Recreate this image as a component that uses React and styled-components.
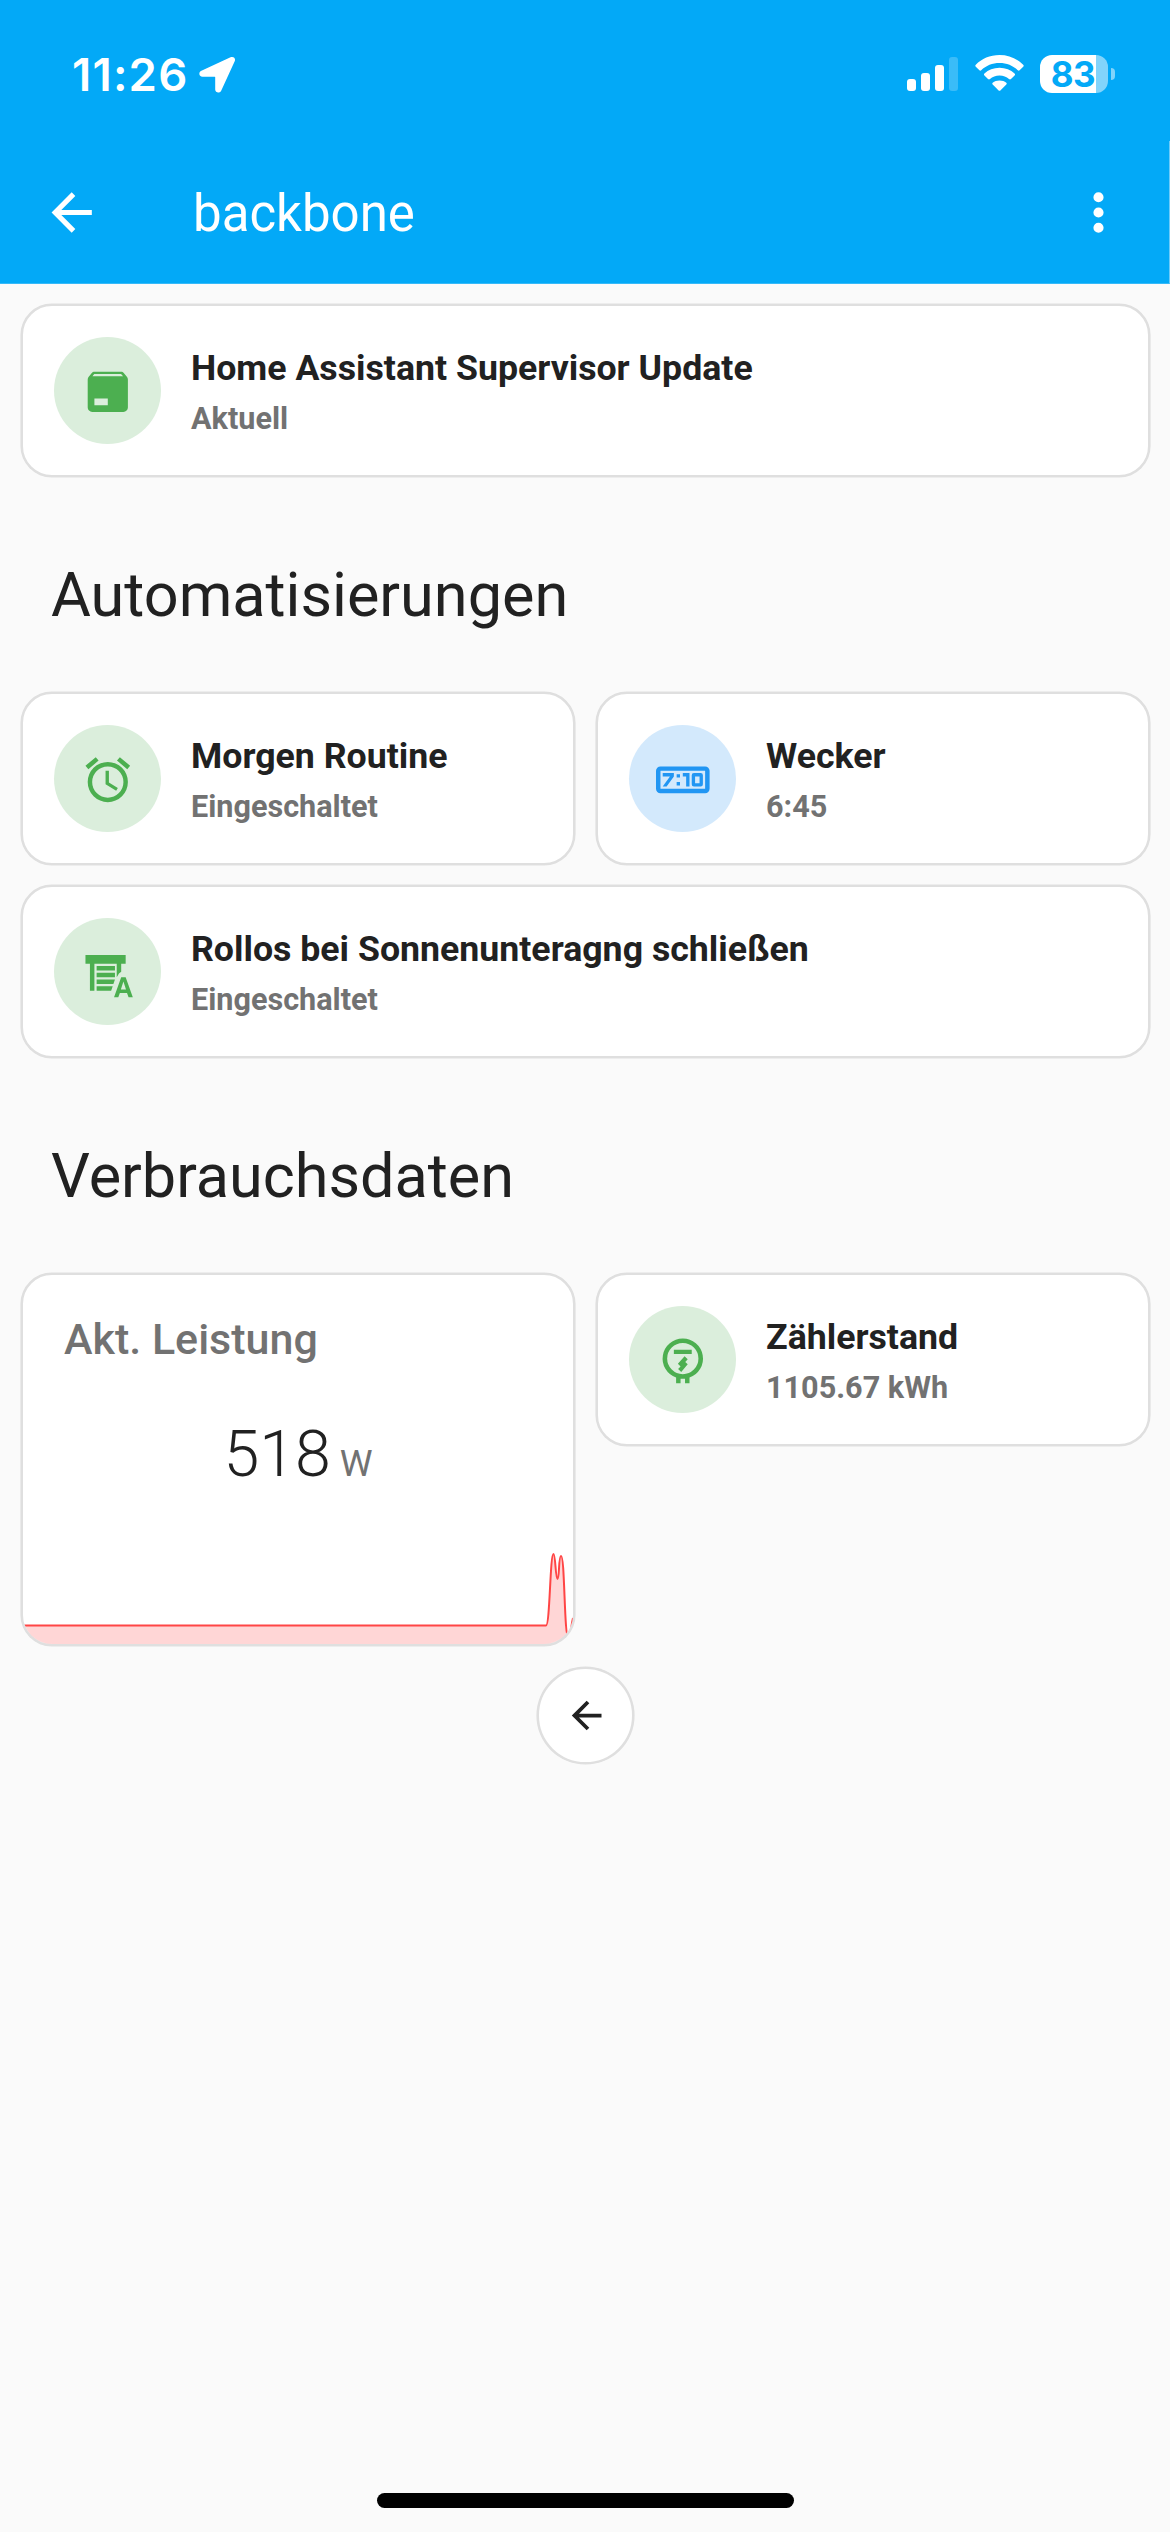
import React from "react"
import styled, { createGlobalStyle } from "styled-components"

const GlobalStyle = createGlobalStyle`
  * {
    box-sizing: border-box;
  }

  body {
    margin: 0;
    background: #fafafa;
    color: #212121;
    font-family: Roboto, "Noto Sans", sans-serif;
  }

  h1, h2, p {
    margin: 0;
    font-weight: 400;
  }

  svg {
    display: block;
    flex: none;
  }
`

const icons = {
  arrowLeft:
    "M20,11V13H8L13.5,18.5L12.08,19.92L4.16,12L12.08,4.08L13.5,5.5L8,11H20Z",
  dots:
    "M12,16A2,2 0 0,1 14,18A2,2 0 0,1 12,20A2,2 0 0,1 10,18A2,2 0 0,1 12,16M12,10A2,2 0 0,1 14,12A2,2 0 0,1 12,14A2,2 0 0,1 10,12A2,2 0 0,1 12,10M12,4A2,2 0 0,1 14,6A2,2 0 0,1 12,8A2,2 0 0,1 10,6A2,2 0 0,1 12,4Z",
  package:
    "M5.12,5H18.87L17.93,4H5.93L5.12,5M20.54,5.23C20.83,5.57 21,6 21,6.5V19A2,2 0 0,1 19,21H5A2,2 0 0,1 3,19V6.5C3,6 3.17,5.57 3.46,5.23L4.84,3.55C5.12,3.21 5.53,3 6,3H18C18.47,3 18.88,3.21 19.15,3.55L20.54,5.23M6,18H12V15H6V18Z",
  alarm:
    "M12,20A7,7 0 0,1 5,13A7,7 0 0,1 12,6A7,7 0 0,1 19,13A7,7 0 0,1 12,20M12,4A9,9 0 0,0 3,13A9,9 0 0,0 12,22A9,9 0 0,0 21,13A9,9 0 0,0 12,4M12.5,8H11V14L15.75,16.85L16.5,15.62L12.5,13.25V8M7.88,3.39L6.6,1.86L2,5.71L3.29,7.24L7.88,3.39M22,5.72L17.4,1.86L16.11,3.39L20.71,7.25L22,5.72Z",
  clock:
    "M2,6C0.89,6 0,6.89 0,8V16A2,2 0 0,0 2,18H22A2,2 0 0,0 24,16V8C24,6.89 23.1,6 22,6H2M2,8H22V16H2V8M3,9V10.5H6.25L3,15H4.75L8,10.5V9H3M9.25,9.5V11H10.75V9.5H9.25M12,9V10.5H13.5V15H15V9H12M17,9A1,1 0 0,0 16,10V14A1,1 0 0,0 17,15H20A1,1 0 0,0 21,14V10A1,1 0 0,0 20,9H17M17.5,10.5H19.5V13.5H17.5V10.5M9.25,13V14.5H10.75V13H9.25Z",
  shutter:
    "M2,4H20V8H18V11.5L17,12.3L16,14V8H6V20H4V8H2V4M7,9H15.2V11H7V9M7,12H15.2V14H7V12M7,15H15.2L14.5,17H7V15M7,18H14.2L13.5,20H7V18M18,14L14.8,23H16.7L17.4,21H20.6L21.3,23H23.2L20,14H18M17.85,19.5L19,15.85L20.15,19.5H17.85Z",
  meter:
    "M12,2A9,9 0 0,0 9,19.5V22H11V20H13V22H15V19.5A9,9 0 0,0 12,2M12,4A7,7 0 0,1 12,18A7,7 0 0,1 12,4M8,7H16V9H8V7M12.8,10L14.2,11.3L13.1,12.5L14.2,13.5L11.3,17L9.9,15.7L11,14.5L9.8,13.3L12.8,10Z",
}

const Icon = ({ name, size }) => (
  <svg width={size} height={size} viewBox="0 0 24 24" fill="currentColor">
    <path fillRule={name === "meter" ? "evenodd" : "nonzero"} d={icons[name]} />
  </svg>
)

const Screen = styled.div`
  display: flex;
  flex-direction: column;
  width: 1170px;
  height: 2532px;
  background: #fafafa;
`

const StatusBar = styled.div`
  display: flex;
  justify-content: space-between;
  height: 141px;
  padding: 55px 55px 0 72px;
  background: #03a9f7;
  color: #fff;
`

const Time = styled.div`
  display: flex;
  align-items: center;
  gap: 11px;
  height: 38px;
  font-family: Inter, sans-serif;
  font-size: 45.5px;
  font-weight: 600;
  letter-spacing: 1.2px;
`

const StatusIcons = styled.div`
  display: flex;
  align-items: flex-start;
  height: 38px;
`

const Signal = styled.div`
  display: flex;
  align-items: flex-end;
  gap: 5px;
  height: 36px;
  margin-right: 17px;
`

const SignalBar = styled.div`
  width: 9px;
  height: ${({ $height }) => $height}px;
  border-radius: 3px;
  background: #fff;
  opacity: ${({ $off }) => ($off ? 0.22 : 1)};
`

const Battery = styled.div`
  display: flex;
  align-items: center;
  justify-content: center;
  width: 68px;
  height: 38px;
  margin-left: 16px;
  padding-right: 2px;
  border-radius: 12px;
  background: linear-gradient(to right, #fff 56px, #82d4fb 56px);
  color: #03a9f7;
  font-family: Inter, sans-serif;
  font-size: 35px;
  font-weight: 700;
  letter-spacing: -0.5px;
`

const BatteryTip = styled.div`
  width: 4px;
  height: 12px;
  margin: 13px 0 0 3px;
  border-radius: 0 4px 4px 0;
  background: #82d4fb;
`

const AppBar = styled.header`
  display: flex;
  align-items: center;
  height: 143px;
  padding: 0 40px 0 41px;
  background: #03a9f7;
  border-right: 1px solid #6dcbfa;
  border-bottom: 1px solid #35b9f8;
  color: #fff;

  h1 {
    flex: 1;
    margin-left: 91px;
    padding-top: 3px;
    font-size: 51px;
    line-height: 60px;
  }
`

const Content = styled.main`
  flex: 1;
  padding: 20px 20px 0 21px;
`

const Row = styled.div`
  display: grid;
  grid-template-columns: ${({ $wide }) => ($wide ? "1fr" : "1fr 1fr")};
  align-items: start;
  gap: 21px;
  margin-bottom: ${({ $gap }) => $gap || 0}px;
`

const Heading = styled.h2`
  display: flex;
  align-items: center;
  height: 215px;
  padding: 21px 0 0 30px;
  font-size: 61.2px;
`

const Card = styled.div`
  border: 2px solid #dfdfdf;
  border-radius: 31px;
  background: #fff;
  box-shadow: 0 0 0 0.6px #dfdfdf;
`

const Tile = styled(Card)`
  display: flex;
  align-items: center;
  gap: 30px;
  height: 173px;
  padding-left: 31px;
`

const Badge = styled.div`
  display: flex;
  flex: none;
  align-items: center;
  justify-content: center;
  width: 107px;
  height: 107px;
  padding: 2px 0 0 1px;
  border-radius: 50%;
  background: ${({ $blue }) => ($blue ? "#d3e9fc" : "#dbeedc")};
  color: ${({ $blue }) => ($blue ? "#2196f3" : "#4caf50")};
`

const Label = styled.div`
  padding-top: 1px;
`

const Primary = styled.p`
  font-size: 35.7px;
  font-weight: 700;
  line-height: 55px;
`

const Secondary = styled.p`
  color: #727272;
  font-size: 30.6px;
  font-weight: 700;
  line-height: 46px;
`

const PowerCard = styled(Card)`
  display: flex;
  flex-direction: column;
  height: 373px;
  overflow: hidden;
`

const PowerName = styled.p`
  padding: 38px 0 0 41px;
  color: #727272;
  font-size: 43px;
  font-weight: 500;
  line-height: 52px;
`

const PowerValue = styled.p`
  display: flex;
  flex: 1;
  align-items: baseline;
  justify-content: center;
  gap: 9px;
  padding-top: 49px;
  font-size: 64.5px;
  font-weight: 300;
  line-height: 80px;

  span {
    color: #727272;
    font-size: 37px;
    font-weight: 400;
  }
`

const BackButton = styled.button`
  display: flex;
  align-items: center;
  justify-content: center;
  width: 97px;
  height: 97px;
  margin: 21px auto 0;
  padding: 0 0 0 2px;
  border: 2px solid #dfdfdf;
  border-radius: 50%;
  background: #fff;
  box-shadow: 0 0 0 0.6px #dfdfdf;
  color: #212121;
`

const HomeIndicator = styled.div`
  width: 417px;
  height: 15px;
  margin: 0 auto 24px;
  border-radius: 8px;
  background: #000;
`

const Entity = ({ icon, name, state, blue }) => (
  <Tile>
    <Badge $blue={blue}>
      <Icon name={icon} size={53.6} />
    </Badge>
    <Label>
      <Primary>{name}</Primary>
      <Secondary>{state}</Secondary>
    </Label>
  </Tile>
)

const LocationArrow = () => (
  <svg width="37" height="38" viewBox="0 0 37 38" fill="#fff">
    <path d="M31.5 2.3C34.500 1 37 3.300 35.700 6.300L22.300 35.500C21 38.700 16.200 38 16.200 34.500V22.300Q16.200 21.800 15.700 21.800H3.500C0 21.800-.9 17.200 2.400 15.800Z" />
  </svg>
)

const Wifi = () => (
  <svg width="49" height="36" viewBox="0 0 49 36" fill="#fff">
    <path d="M24.500 0C34 0 42.300 3.700 48.200 9.700Q49.200 10.800 48.200 11.800L44.600 15.300Q43.700 16 42.800 15.200C38 10.600 31.600 8 24.500 8S11 10.600 6.200 15.200Q5.300 16 4.400 15.300L.8 11.800Q-.2 10.800.8 9.700C6.700 3.700 15 0 24.500 0Z" />
    <path d="M24.500 12.700C30.500 12.700 35.700 14.800 39.600 18.500Q40.600 19.500 39.600 20.500L36 24Q35 24.900 34 24C31.500 21.800 28.300 20.500 24.500 20.500S17.500 21.800 15 24Q14 24.900 13 24L9.400 20.500Q8.400 19.500 9.400 18.500C13.300 14.800 18.500 12.700 24.500 12.700Z" />
    <path d="M24.500 25.500C27.200 25.500 29.600 26.300 31.300 27.700Q32.200 28.500 31.300 29.500L25.600 35.200Q24.500 36.200 23.400 35.200L17.700 29.500Q16.800 28.500 17.700 27.700C19.400 26.300 21.800 25.500 24.500 25.500Z" />
  </svg>
)

const curve =
  "M-2,75.5H523C527,75.5 527,4 530.5,4C532.500,4 532.500,29 534.500,29S535.500,6 538,6C542,6 541,88 545.5,88C548,88 547.5,78 550,68"

const PowerGraph = () => (
  <svg width="550" height="94" viewBox="0 0 550 94">
    <path d={`${curve}V96H-2Z`} fill="#ff0000" fillOpacity="0.16" />
    <path d={curve} fill="none" stroke="#ff4545" strokeWidth="2" />
  </svg>
)

const App = () => (
  <Screen>
    <GlobalStyle />
    <StatusBar>
      <Time>
        11:26
        <LocationArrow />
      </Time>
      <StatusIcons>
        <Signal>
          <SignalBar $height={12} />
          <SignalBar $height={18} />
          <SignalBar $height={26} />
          <SignalBar $height={34} $off />
        </Signal>
        <Wifi />
        <Battery>83</Battery>
        <BatteryTip />
      </StatusIcons>
    </StatusBar>
    <AppBar>
      <Icon name="arrowLeft" size={61} />
      <h1>backbone</h1>
      <Icon name="dots" size={61} />
    </AppBar>
    <Content>
      <Row $wide>
        <Entity
          icon="package"
          name="Home Assistant Supervisor Update"
          state="Aktuell"
        />
      </Row>
      <Heading>Automatisierungen</Heading>
      <Row $gap={20}>
        <Entity icon="alarm" name="Morgen Routine" state="Eingeschaltet" />
        <Entity icon="clock" name="Wecker" state="6:45" blue />
      </Row>
      <Row $wide>
        <Entity
          icon="shutter"
          name="Rollos bei Sonnenunteragng schließen"
          state="Eingeschaltet"
        />
      </Row>
      <Heading>Verbrauchsdaten</Heading>
      <Row>
        <PowerCard>
          <PowerName>Akt. Leistung</PowerName>
          <PowerValue>
            518 <span>W</span>
          </PowerValue>
          <PowerGraph />
        </PowerCard>
        <Entity icon="meter" name="Zählerstand" state="1105.67 kWh" />
      </Row>
      <BackButton>
        <Icon name="arrowLeft" size={45} />
      </BackButton>
    </Content>
    <HomeIndicator />
  </Screen>
)

export default App
